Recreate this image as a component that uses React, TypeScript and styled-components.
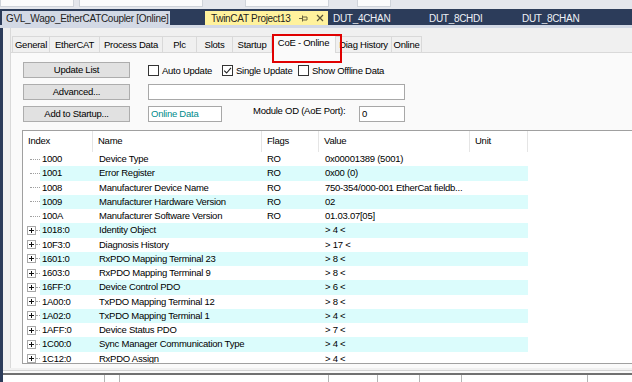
import React from "react";
import styled, { createGlobalStyle, css } from "styled-components";

const GlobalStyle = createGlobalStyle`
  html, body { margin: 0; padding: 0; }
  body { width: 632px; height: 382px; overflow: hidden; background: #f0f0f0; }
  * { box-sizing: border-box; }
`;

const WELL = "#2c3c5a";
const LIGHTTAB = "#d3d9e5";

const Root = styled.div`
  width: 632px;
  height: 382px;
  overflow: hidden;
  display: flex;
  flex-direction: column;
  background: #f0f0f0;
  font-family: "Liberation Sans", Arial, sans-serif;
  font-size: 9.5px;
  letter-spacing: -0.25px;
  color: #000;
`;

const TopStrip = styled.div`
  height: 9px;
  flex-shrink: 0;
  display: flex;
  background: #e4e6ec;
`;

const ToolBox = styled.div<{ $w: number; $ml: number }>`
  width: ${(p) => p.$w}px;
  margin-left: ${(p) => p.$ml}px;
  height: 7px;
  background: #fbfbfc;
  border: 1px solid #cfd3da;
  border-top: none;
`;

const TabWell = styled.div`
  height: 16px;
  flex-shrink: 0;
  display: flex;
  align-items: flex-end;
  padding-left: 2px;
  background: ${WELL};
`;

const DocTab = styled.div<{ $kind: "light" | "active" | "plain"; $w?: number; $gap?: number }>`
  height: 14px;
  ${(p) => (p.$w ? `width: ${p.$w}px;` : "flex: 1;")}
  margin-right: ${(p) => p.$gap ?? 0}px;
  display: flex;
  align-items: center;
  padding-left: ${(p) => (p.$kind === "light" ? 4 : p.$kind === "active" ? 6 : 5)}px;
  font-size: 10px;
  letter-spacing: -0.3px;
  white-space: nowrap;
  ${(p) =>
    p.$kind === "light"
      ? css`background: ${LIGHTTAB}; color: #1e1e1e;`
      : p.$kind === "active"
      ? css`background: #fff29d; color: #1e1e1e;`
      : css`background: transparent; color: #eef1f6;`}
`;

const TabIcons = styled.div`
  margin-left: auto;
  margin-right: 4px;
  display: flex;
  align-items: center;
  gap: 8px;
`;

const AccentStrip = styled.div`
  height: 3px;
  flex-shrink: 0;
  background: ${LIGHTTAB};
`;

const Main = styled.div`
  flex: 1;
  display: flex;
  min-height: 0;
`;

const LeftFrame = styled.div`
  width: 3px;
  flex-shrink: 0;
  background: ${WELL};
`;

const Workspace = styled.div`
  flex: 1;
  min-width: 0;
  display: flex;
  flex-direction: column;
`;

const TabControl = styled.div`
  flex: 1;
  min-height: 0;
  margin-left: 7px;
  border-left: 1px solid #d9d9d9;
  display: flex;
  flex-direction: column;
`;

const TabStrip = styled.div`
  height: 24px;
  flex-shrink: 0;
  display: flex;
  align-items: flex-end;
  padding-left: 1px;
  position: relative;
  z-index: 2;
`;

const PropTab = styled.div<{ $w: number; $first?: boolean; $sel?: boolean }>`
  width: ${(p) => p.$w}px;
  height: 16px;
  border-top: 1px solid #d9d9d9;
  border-right: 1px solid #d9d9d9;
  ${(p) => (p.$first ? "border-left: 1px solid #d9d9d9;" : "")}
  background: #f0f0f0;
  text-align: center;
  line-height: 15px;
  white-space: nowrap;
  ${(p) =>
    p.$sel &&
    css`
      height: 19px;
      margin-bottom: -1px;
      background: #fafafa;
      position: relative;
      &::after {
        content: "";
        position: absolute;
        left: 0;
        top: -1px;
        width: 66px;
        height: 25px;
        border: 2px solid #e00000;
      }
    `}
`;

const TabPage = styled.div`
  flex: 1;
  min-height: 0;
  overflow: hidden;
  background: #fafafa;
  border-top: 1px solid #d9d9d9;
  padding: 9px 0 0 11px;
  display: flex;
  flex-direction: column;
`;

const Controls = styled.div`
  display: grid;
  grid-template-columns: 107px 1fr;
  column-gap: 18px;
  row-gap: 6px;
  margin-left: 1px;
`;

const Button = styled.div`
  height: 16px;
  background: #e1e1e1;
  border: 1px solid #adadad;
  text-align: center;
  line-height: 14px;
  white-space: nowrap;
`;

const CtrlRow = styled.div`
  display: flex;
  align-items: center;
  height: 16px;
`;

const CheckItem = styled.div<{ $w?: number }>`
  display: flex;
  align-items: center;
  gap: 3px;
  ${(p) => (p.$w ? `width: ${p.$w}px;` : "")}
  white-space: nowrap;
`;

const Box = styled.div`
  width: 11px;
  height: 11px;
  border: 1px solid #333;
  background: #fff;
  display: flex;
  align-items: center;
  justify-content: center;
`;

const Field = styled.div<{ $w: number; $color?: string }>`
  width: ${(p) => p.$w}px;
  height: 16px;
  border: 1px solid #a8a8a8;
  background: #fff;
  padding-left: 2px;
  line-height: 14px;
  color: ${(p) => p.$color ?? "#000"};
  white-space: nowrap;
`;

const FieldLabel = styled.div<{ $ml: number; $w: number }>`
  margin-left: ${(p) => p.$ml}px;
  width: ${(p) => p.$w}px;
  align-self: flex-start;
  line-height: 12px;
  margin-top: -1px;
  white-space: nowrap;
`;

const List = styled.div`
  margin-top: 8px;
  width: 640px;
  height: 234px;
  flex-shrink: 0;
  border: 1px solid #a0a0a0;
  border-right: none;
  background: #fff;
  overflow: hidden;
`;

const ListHeader = styled.div`
  display: grid;
  grid-template-columns: 70px 169px 57px 151px 58px 1fr;
  height: 21px;
`;

const HeaderCell = styled.div<{ $last?: boolean }>`
  padding-left: 5px;
  line-height: 20px;
  border-right: ${(p) => (p.$last ? "none" : "1px solid #e5e5e5")};
`;

const Row = styled.div`
  display: grid;
  grid-template-columns: 17px 53px 169px 57px 151px 58px 1fr;
  height: 14.25px;
  line-height: 14.25px;
  white-space: nowrap;
`;

const TreeCell = styled.div<{ $plus?: boolean }>`
  display: flex;
  align-items: center;
  padding-left: ${(p) => (p.$plus ? 4 : 7)}px;
`;

const Dots = styled.div<{ $w: number }>`
  width: ${(p) => p.$w}px;
  height: 0;
  border-top: 1px dotted #a0a0a0;
`;

const Cell = styled.div<{ $alt: boolean; $pl: number }>`
  padding-left: ${(p) => p.$pl}px;
  background: ${(p) => (p.$alt ? "#dbfcfc" : "transparent")};
  overflow: hidden;
`;

const BottomPanel = styled.div`
  height: 14px;
  flex-shrink: 0;
  padding-top: 2px;
  display: flex;
  flex-direction: column;
  background: #f0f0f0;
`;

const BottomFrame = styled.div`
  flex: 1;
  border-top: 1px solid #d3d3d3;
  background: #fafafa;
  padding-top: 2px;
  display: flex;
  flex-direction: column;
`;

const BottomHeader = styled.div`
  flex: 1;
  border-top: 2px solid #707070;
  background: #fff;
  display: grid;
  grid-template-columns: 102px 15px 209px 49px 42px 42px 126px 1fr;
`;

const BottomCell = styled.div`
  border-right: 1px solid #b4b4b4;
`;

const PinIcon = () => (
  <svg width="9" height="9" viewBox="0 0 9 9">
    <path d="M0 4.5H3M3.5 1.5V7.5M3.5 3H8V6H3.5" stroke="#6b6540" strokeWidth="1" fill="none" />
  </svg>
);

const CloseIcon = () => (
  <svg width="8" height="8" viewBox="0 0 8 8">
    <path d="M1 1L7 7M7 1L1 7" stroke="#5a5638" strokeWidth="1.2" />
  </svg>
);

const Check = () => (
  <svg width="9" height="9" viewBox="0 0 9 9">
    <path d="M1.2 4.6L3.6 7L8 1.8" stroke="#222" strokeWidth="1.1" fill="none" />
  </svg>
);

const PlusBox = () => (
  <svg width="9" height="9" viewBox="0 0 9 9" style={{ flexShrink: 0 }}>
    <rect x="0.5" y="0.5" width="8" height="8" fill="#fff" stroke="#a8a8a8" />
    <path d="M2 4.5H7M4.5 2V7" stroke="#111" strokeWidth="1" />
  </svg>
);

type Entry = { idx: string; name: string; flags: string; value: string; plus?: boolean };

const entries: Entry[] = [
  { idx: "1000", name: "Device Type", flags: "RO", value: "0x00001389 (5001)" },
  { idx: "1001", name: "Error Register", flags: "RO", value: "0x00 (0)" },
  { idx: "1008", name: "Manufacturer Device Name", flags: "RO", value: "750-354/000-001 EtherCat fieldb..." },
  { idx: "1009", name: "Manufacturer Hardware Version", flags: "RO", value: "02" },
  { idx: "100A", name: "Manufacturer Software Version", flags: "RO", value: "01.03.07[05]" },
  { idx: "1018:0", name: "Identity Object", flags: "", value: "> 4 <", plus: true },
  { idx: "10F3:0", name: "Diagnosis History", flags: "", value: "> 17 <", plus: true },
  { idx: "1601:0", name: "RxPDO Mapping Terminal 23", flags: "", value: "> 8 <", plus: true },
  { idx: "1603:0", name: "RxPDO Mapping Terminal 9", flags: "", value: "> 8 <", plus: true },
  { idx: "16FF:0", name: "Device Control PDO", flags: "", value: "> 6 <", plus: true },
  { idx: "1A00:0", name: "TxPDO Mapping Terminal 12", flags: "", value: "> 8 <", plus: true },
  { idx: "1A02:0", name: "TxPDO Mapping Terminal 1", flags: "", value: "> 4 <", plus: true },
  { idx: "1AFF:0", name: "Device Status PDO", flags: "", value: "> 7 <", plus: true },
  { idx: "1C00:0", name: "Sync Manager Communication Type", flags: "", value: "> 4 <", plus: true },
  { idx: "1C12:0", name: "RxPDO Assign", flags: "", value: "> 4 <", plus: true },
];

const propTabs = [
  { label: "General", w: 38 },
  { label: "EtherCAT", w: 50 },
  { label: "Process Data", w: 63 },
  { label: "Plc", w: 34 },
  { label: "Slots", w: 36 },
  { label: "Startup", w: 39 },
  { label: "CoE - Online", w: 64, sel: true },
  { label: "Diag History", w: 56 },
  { label: "Online", w: 30 },
];

export default function App() {
  return (
    <Root>
      <GlobalStyle />
      <TopStrip>
        <ToolBox $w={74} $ml={0} />
        <ToolBox $w={124} $ml={5} />
        <ToolBox $w={84} $ml={42} />
        <ToolBox $w={34} $ml={28} />
      </TopStrip>
      <TabWell>
        <DocTab $kind="light" $w={168} $gap={35}>GVL_Wago_EtherCATCoupler [Online]</DocTab>
        <DocTab $kind="active" $w={123}>
          TwinCAT Project13
          <TabIcons>
            <PinIcon />
            <CloseIcon />
          </TabIcons>
        </DocTab>
        <DocTab $kind="plain" $w={96}>DUT_4CHAN</DocTab>
        <DocTab $kind="plain" $w={93}>DUT_8CHDI</DocTab>
        <DocTab $kind="plain">DUT_8CHAN</DocTab>
      </TabWell>
      <AccentStrip />
      <Main>
        <LeftFrame />
        <Workspace>
          <TabControl>
            <TabStrip>
              {propTabs.map((t, i) => (
                <PropTab key={t.label} $w={t.w} $first={i === 0} $sel={t.sel}>
                  {t.label}
                </PropTab>
              ))}
            </TabStrip>
            <TabPage>
              <Controls>
                <Button>Update List</Button>
                <CtrlRow>
                  <CheckItem $w={74}>
                    <Box />
                    Auto Update
                  </CheckItem>
                  <CheckItem $w={76}>
                    <Box>
                      <Check />
                    </Box>
                    Single Update
                  </CheckItem>
                  <CheckItem>
                    <Box />
                    Show Offline Data
                  </CheckItem>
                </CtrlRow>
                <Button>Advanced...</Button>
                <CtrlRow>
                  <Field $w={257} />
                </CtrlRow>
                <Button>Add to Startup...</Button>
                <CtrlRow>
                  <Field $w={74} $color="#008b8b">Online Data</Field>
                  <FieldLabel $ml={31} $w={106}>Module OD (AoE Port):</FieldLabel>
                  <Field $w={46}>0</Field>
                </CtrlRow>
              </Controls>
              <List>
                <ListHeader>
                  <HeaderCell>Index</HeaderCell>
                  <HeaderCell>Name</HeaderCell>
                  <HeaderCell>Flags</HeaderCell>
                  <HeaderCell>Value</HeaderCell>
                  <HeaderCell>Unit</HeaderCell>
                  <HeaderCell $last />
                </ListHeader>
                {entries.map((e, i) => {
                  const alt = i % 2 === 1;
                  return (
                    <Row key={e.idx}>
                      <TreeCell $plus={e.plus}>
                        {e.plus ? (
                          <>
                            <PlusBox />
                            <Dots $w={4} />
                          </>
                        ) : (
                          <Dots $w={10} />
                        )}
                      </TreeCell>
                      <Cell $alt={alt} $pl={2}>{e.idx}</Cell>
                      <Cell $alt={alt} $pl={6}>{e.name}</Cell>
                      <Cell $alt={alt} $pl={5}>{e.flags}</Cell>
                      <Cell $alt={alt} $pl={6}>{e.value}</Cell>
                      <Cell $alt={alt} $pl={6} />
                      <div />
                    </Row>
                  );
                })}
              </List>
            </TabPage>
          </TabControl>
          <BottomPanel>
            <BottomFrame>
              <BottomHeader>
                <BottomCell />
                <BottomCell />
                <BottomCell />
                <BottomCell />
                <BottomCell />
                <BottomCell />
                <BottomCell />
                <div />
              </BottomHeader>
            </BottomFrame>
          </BottomPanel>
        </Workspace>
      </Main>
    </Root>
  );
}
